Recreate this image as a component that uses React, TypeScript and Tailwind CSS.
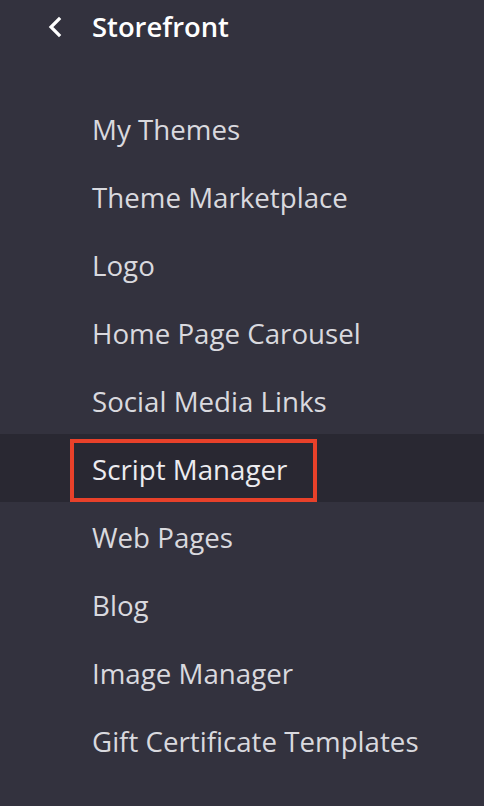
import React from "react";

const items = [
  "My Themes",
  "Theme Marketplace",
  "Logo",
  "Home Page Carousel",
  "Social Media Links",
  "Script Manager",
  "Web Pages",
  "Blog",
  "Image Manager",
  "Gift Certificate Templates",
];

export default function App() {
  return (
    <div
      className="w-[484px] h-[806px] bg-[#33323e] overflow-hidden"
      style={{ fontFamily: '"Open Sans", "Noto Sans", sans-serif' }}
    >
      <div className="h-[54px] flex items-center">
        <div className="w-[92px] flex items-center pl-[47px]">
          <svg width="16" height="22" viewBox="0 0 16 22" fill="none">
            <path d="M12 3 L4 11 L12 19" stroke="#ffffff" strokeWidth="3.2" strokeLinecap="square" strokeLinejoin="miter" />
          </svg>
        </div>
        <span className="text-[27.4px] font-semibold text-white">Storefront</span>
      </div>
      <div className="mt-[40px] flex flex-col">
        {items.map((it) => {
          const active = it === "Script Manager";
          return (
            <div
              key={it}
              className={`h-[68px] flex items-center ${active ? "bg-[#292832]" : ""}`}
            >
              <div className="pl-[70px] h-full flex items-end">
                {active ? (
                  <span className="h-[63px] flex items-center pl-[18px] pr-[26px] pb-[1px] text-[27.7px] font-normal text-[#ececf0] border-[4px] border-[#e8412a]">
                    {it}
                  </span>
                ) : (
                  <span className="h-[63px] flex items-center pl-[22px] pr-[30px] pb-[1px] text-[27.7px] font-normal text-[#d9d9de]">
                    {it}
                  </span>
                )}
              </div>
            </div>
          );
        })}
      </div>
    </div>
  );
}
